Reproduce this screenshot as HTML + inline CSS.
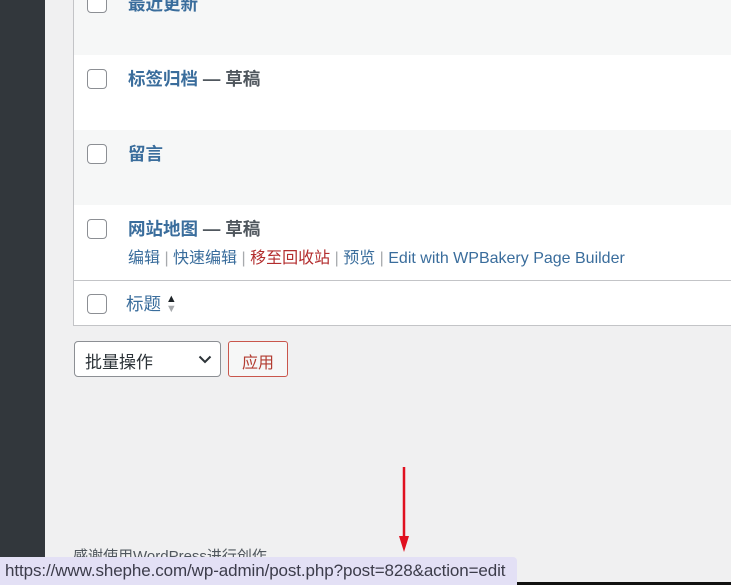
<!DOCTYPE html>
<html><head><meta charset="utf-8"><style>
*{box-sizing:border-box;margin:0;padding:0}
body{width:731px;height:585px;overflow:hidden;background:#f0f0f1;font-family:"Liberation Sans","Noto Sans CJK SC",sans-serif;position:relative}
.side{position:absolute;left:0;top:0;width:45px;height:585px;background:#32373c}
.tbl{position:absolute;left:73px;top:-5px;width:670px;height:331px;border:1px solid #c3c4c7;background:#fff}
.row{position:absolute;left:0;width:100%;height:75px}
.cb{position:absolute;left:13px;width:20px;height:20px;border:1px solid #8c8f94;border-radius:4px;background:#fff}
.t{position:absolute;left:54px;font-size:17.5px;font-weight:bold;color:#3a6d9c;line-height:24px}
.t span{color:#50575e}
.act{position:absolute;left:54px;font-size:16px;color:#3a6d9c;line-height:20px}
.act .s{color:#a7aaad}
.act .r{color:#b32d2e}
</style></head><body>
<div class="side"></div>
<div class="tbl">
 <div class="row" style="top:0;height:59px;background:#f6f7f7"><div class="cb" style="top:-3px"></div><div class="t" style="top:-4px">最近更新</div></div>
 <div class="row" style="top:59px"><div class="cb" style="top:14px"></div><div class="t" style="top:12px">标签归档 <span>— 草稿</span></div></div>
 <div class="row" style="top:134px;background:#f6f7f7"><div class="cb" style="top:14px"></div><div class="t" style="top:12px">留言</div></div>
 <div class="row" style="top:209px"><div class="cb" style="top:14px"></div><div class="t" style="top:12px">网站地图 <span>— 草稿</span>
 </div><div class="act" style="top:44px">编辑 <span class="s">|</span> 快速编辑 <span class="s">|</span> <span class="r">移至回收站</span> <span class="s">|</span> 预览 <span class="s">|</span> Edit with WPBakery Page Builder</div></div>
 <div style="position:absolute;left:0;top:284px;width:100%;border-top:1px solid #c3c4c7;height:46px">
  <div class="cb" style="top:13px"></div>
  <div style="position:absolute;left:52px;top:11px;font-size:17.5px;line-height:24px;color:#3a6d9c">标题 <span style="font-size:11px;line-height:10px;display:inline-block;vertical-align:top;margin-top:2px;color:#1d2327">▲<br><span style="color:#a7aaad">▼</span></span></div>
 </div>
</div>
<div style="position:absolute;left:74px;top:341px;width:147px;height:36px;border:1px solid #8c8f94;border-radius:4px;background:#fff;font-size:17px;color:#2c3338;padding:6px 0 0 10px">批量操作
<svg style="position:absolute;right:8px;top:13px" width="14" height="9" viewBox="0 0 14 9"><path d="M1.5 1.5 L7 7 L12.5 1.5" fill="none" stroke="#2c3338" stroke-width="2"/></svg></div>
<div style="position:absolute;left:228px;top:341px;width:60px;height:36px;border:1px solid #c9564c;border-radius:3px;background:#f6f7f7;font-size:16px;color:#b33c31;text-align:center;padding-top:7px">应用</div>
<div style="position:absolute;left:73px;top:545px;font-size:15px;color:#50575e">感谢使用WordPress进行创作。</div>
<svg style="position:absolute;left:396px;top:466px" width="16" height="88"><path d="M8 1 L8 74" stroke="#e01020" stroke-width="2.5"/><path d="M3 70 L13 70 L8 86 Z" fill="#e01020"/></svg>
<div style="position:absolute;left:0;top:557px;width:517px;height:28px;background:#e3e0f5;border-top-right-radius:4px;font-size:17px;color:#3c3c4a;padding:4px 0 0 5px;letter-spacing:-0.1px;white-space:nowrap">https://www.shephe.com/wp-admin/post.php?post=828&amp;action=edit</div>
<div style="position:absolute;left:517px;top:582px;width:214px;height:3px;background:#111"></div>
</body></html>
